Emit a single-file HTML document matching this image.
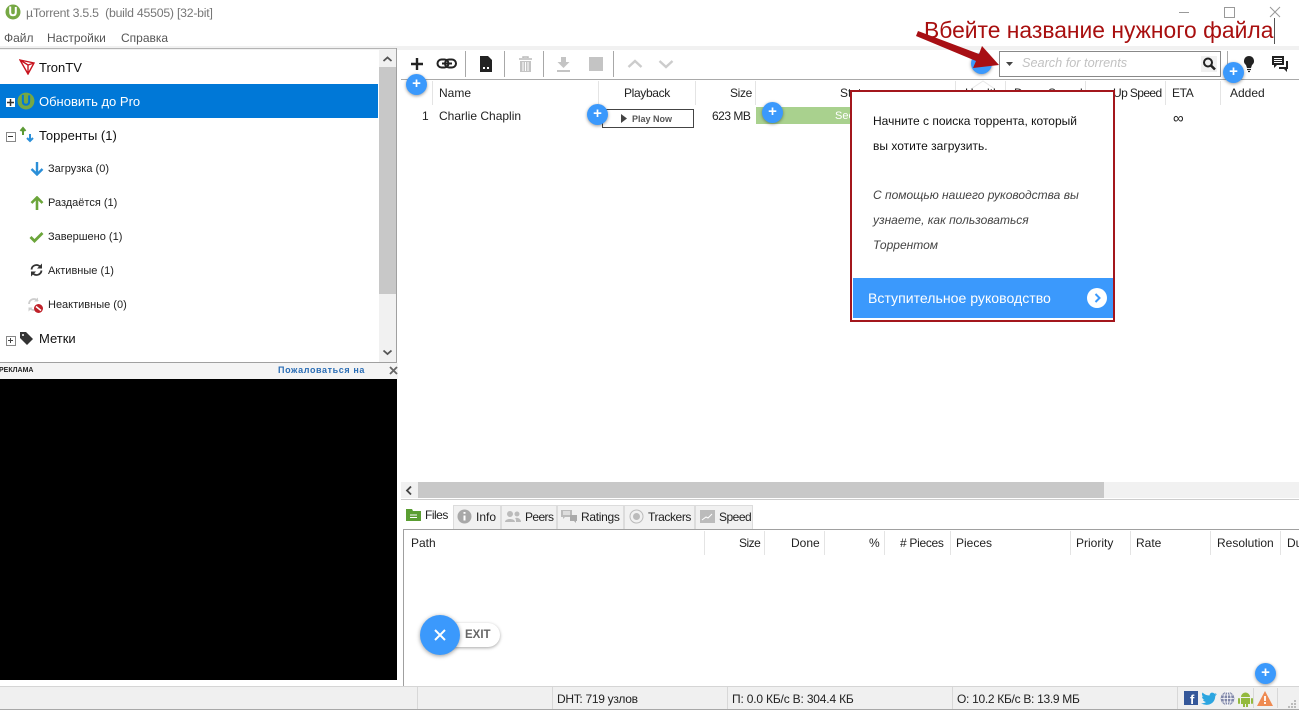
<!DOCTYPE html>
<html lang="ru"><head><meta charset="utf-8"><title>µTorrent</title>
<style>
html,body{margin:0;padding:0;background:#fff}
#p{position:relative;width:1299px;height:710px;overflow:hidden;background:#fff;font-family:"Liberation Sans","Noto Sans CJK SC",sans-serif;font-size:12px;color:#222}
#p div,#p svg{position:absolute}
.t{white-space:nowrap;line-height:16px;height:16px}
.g{color:#666}
.s{font-size:11px;color:#222}
.m{font-size:13px;color:#111}
.l{background:#e4e4e4;width:1px}
.ts{width:1px;background:#a8a8a8;top:51px;height:26px}
.b{width:21px;height:21px;border-radius:50%;background:#3b99fc;box-shadow:0 1px 3px rgba(0,0,0,.4);color:#fff;text-align:center;font:bold 15px/20px "Liberation Sans",sans-serif}
.h{top:85px}
.h2{top:535px}
.n{letter-spacing:-.35px}
.tab{top:505px;height:24px;background:#f1f1f1;border:1px solid #dcdcdc;border-bottom:0;box-sizing:border-box}
</style></head><body><div id="p">

<!-- title bar -->
<svg style="left:5px;top:4px" width="16" height="16" viewBox="0 0 16 16"><circle cx="8" cy="8" r="7.500" fill="#76a844"/><path d="M5.200 2.500v5.800c0 2 1 3 2.800 3s2.800-1 2.800-3V3" fill="none" stroke="#fff" stroke-width="2"/><path d="M8 6.500v2" stroke="#76a844" stroke-width="1.500"/></svg>
<div class="t g" style="left:26px;top:5px;font-size:12.300px;color:#777;letter-spacing:-.24px">µTorrent 3.5.5&nbsp; (build 45505) [32-bit]</div>
<div class="t" style="left:4px;top:30px;color:#555">Файл</div>
<div class="t" style="left:47px;top:30px;color:#555">Настройки</div>
<div class="t" style="left:121px;top:30px;color:#555">Справка</div>
<div style="left:1179px;top:12px;width:10px;height:1px;background:#999"></div>
<div style="left:1224px;top:7px;width:9px;height:9px;border:1px solid #999"></div>
<svg style="left:1269px;top:6px" width="12" height="12"><path d="M1 1l10 10M11 1L1 11" stroke="#999" fill="none"/></svg>
<div style="left:0;top:46px;width:1299px;height:4px;background:#f1f1f1"></div>

<!-- annotation -->
<div class="t" style="left:924px;top:17px;height:26px;line-height:26px;font-size:22.850px;color:#a80f0f">Вбейте название нужного файла</div>
<div style="left:1274px;top:18px;width:1px;height:26px;background:#555"></div>

<!-- sidebar -->
<div style="left:0;top:48px;width:397px;height:1px;background:#b4b4b4"></div>
<div style="left:396px;top:48px;width:1px;height:315px;background:#a0a0a0"></div>
<div style="left:0;top:362px;width:397px;height:1px;background:#a0a0a0"></div>
<div style="left:379px;top:49px;width:17px;height:313px;background:#f1f1f1"></div>
<div style="left:379px;top:67px;width:17px;height:227px;background:#c8c8c8"></div>
<svg style="left:381px;top:55px" width="13" height="9"><path d="M2.500 6L6.500 2.500 10.500 6" fill="none" stroke="#555" stroke-width="1.800"/></svg>
<svg style="left:381px;top:348px" width="13" height="9"><path d="M2.500 2.500L6.500 6 10.500 2.500" fill="none" stroke="#555" stroke-width="1.800"/></svg>
<div style="left:0;top:84px;width:378px;height:34px;background:#0078d7"></div>

<svg style="left:19px;top:59px" width="16" height="16" viewBox="0 0 16 16"><path d="M1 1l14 3-6 11z M1 1l8 14 M1 1l8 5 6-2 M9 6v9" fill="none" stroke="#c8141e" stroke-width="1.400"/></svg>
<div class="t m" style="left:39px;top:60px">TronTV</div>

<div style="left:6px;top:98px;width:9px;height:9px;background:#fff;border:0"></div>
<svg style="left:6px;top:98px" width="9" height="9"><path d="M1 4.500h7M4.500 1v7" stroke="#333" stroke-width="1.500"/></svg>
<svg style="left:17px;top:92px" width="18" height="18" viewBox="0 0 16 16"><circle cx="8" cy="8" r="7.500" fill="#76a844"/><path d="M5.200 2.500v5.800c0 2 1 3 2.800 3s2.800-1 2.800-3V3" fill="none" stroke="#0078d7" stroke-width="1.800"/></svg>
<div class="t m" style="left:39px;top:94px;color:#fff">Обновить до Pro</div>

<div style="left:6px;top:132px;width:8px;height:8px;border:1px solid #888"></div>
<div style="left:8px;top:136px;width:5px;height:1px;background:#333"></div>
<svg style="left:18px;top:126px" width="17" height="17"><path d="M5 9V3M2.500 5L5 2 7.500 5" stroke="#5c9a34" stroke-width="2" fill="none"/><path d="M12 8v7M9 12l3 3 3-3" stroke="#2b8fd8" stroke-width="2" fill="none"/></svg>
<div class="t m" style="left:39px;top:128px">Торренты (1)</div>

<svg style="left:30px;top:161px" width="14" height="15"><path d="M7 1v12M1.500 8L7 13.500 12.500 8" stroke="#2b8fd8" stroke-width="2.400" fill="none"/></svg>
<div class="t s" style="left:48px;top:161px">Загрузка (0)</div>
<svg style="left:30px;top:196px" width="14" height="15"><path d="M7 14V2M1.500 7L7 1.500 12.500 7" stroke="#6ba53a" stroke-width="2.600" fill="none"/></svg>
<div class="t s" style="left:48px;top:195px">Раздаётся (1)</div>
<svg style="left:29px;top:231px" width="15" height="12"><path d="M1.500 6L5.500 10 13.500 2" stroke="#6ba53a" stroke-width="2.800" fill="none"/></svg>
<div class="t s" style="left:48px;top:229px">Завершено (1)</div>
<svg style="left:30px;top:263px" width="13" height="14" viewBox="0 0 13 14"><path d="M1.500 6.500A5 5 0 0 1 10 3.500M11.500 7.500A5 5 0 0 1 3 10.500" stroke="#333" stroke-width="1.800" fill="none"/><path d="M12 0.500v5h-5zM1 13.500v-5h5z" fill="#333"/></svg>
<div class="t s" style="left:48px;top:263px">Активные (1)</div>
<svg style="left:27px;top:297px" width="17" height="17" viewBox="0 0 17 17"><path d="M2 7A5 5 0 0 1 11 4M12 8A5 5 0 0 1 3 11" stroke="#ccc" stroke-width="1.800" fill="none"/><path d="M11 0.500v4H7zM1.500 14.500v-4h4z" fill="#ccc"/><circle cx="11.500" cy="11.500" r="4.500" fill="#c0222a"/><path d="M9 9.500l5 4" stroke="#fff" stroke-width="1.500"/></svg>
<div class="t s" style="left:48px;top:297px">Неактивные (0)</div>

<div style="left:6px;top:336px;width:8px;height:8px;border:1px solid #888"></div>
<svg style="left:7px;top:337px" width="8" height="8"><path d="M1 3.500h5M3.500 1v5" stroke="#444"/></svg>
<svg style="left:19px;top:331px" width="15" height="15"><path d="M1 1h6l7 7-6 6-7-7z" fill="#333"/><circle cx="4" cy="4" r="1" fill="#fff"/></svg>
<div class="t m" style="left:39px;top:331px">Метки</div>

<!-- ad -->
<div style="left:0;top:363px;width:398px;height:16px;background:#f4f4f4"></div>
<div class="t" style="left:-1px;top:363px;font-size:7px;font-weight:bold;color:#222">РЕКЛАМА</div>
<div class="t" style="left:278px;top:362px;font-size:9px;font-weight:bold;color:#2a6db5;letter-spacing:.6px">Пожаловаться на</div>
<svg style="left:389px;top:366px" width="9" height="9"><path d="M1 1l7 7M8 1L1 8" stroke="#666" stroke-width="1.800"/></svg>
<div style="left:0;top:379px;width:397px;height:301px;background:#000"></div>

<!-- toolbar -->
<div style="left:401px;top:79px;width:898px;height:1px;background:#a9a9a9"></div>
<svg style="left:409px;top:56px" width="16" height="16"><path d="M8 2v12M2 8h12" stroke="#222" stroke-width="2.400"/></svg>
<svg style="left:436px;top:57px" width="22" height="14"><rect x="1.500" y="2.500" width="11" height="8" rx="4" fill="none" stroke="#222" stroke-width="2"/><rect x="9" y="2.500" width="11" height="8" rx="4" fill="none" stroke="#222" stroke-width="2"/><path d="M6 6.500h10" stroke="#222" stroke-width="2"/></svg>
<div class="ts" style="left:465px"></div>
<svg style="left:479px;top:56px" width="14" height="16"><path d="M1 0h8l4 4v12H1z" fill="#222"/><path d="M4 11h2v2H4zM8 11h2v2H8z" fill="#fff"/></svg>
<div class="ts" style="left:504px"></div>
<svg style="left:518px;top:56px" width="15" height="16"><path d="M1 3h13M5 2V1h5v1" stroke="#bbb" stroke-width="1.500" fill="none"/><path d="M2 5h11v11H2z" fill="#c4c4c4"/><path d="M5 6v9M7.500 6v9M10 6v9" stroke="#fff"/></svg>
<div class="ts" style="left:543px"></div>
<svg style="left:556px;top:56px" width="15" height="16"><path d="M5 1h5v5h3.500L7.500 12 1.500 6H5zM1 14h13v2H1z" fill="#c4c4c4"/></svg>
<div style="left:589px;top:57px;width:14px;height:14px;background:#c4c4c4"></div>
<div class="ts" style="left:613px"></div>
<svg style="left:627px;top:58px" width="16" height="12"><path d="M1.500 9L8 3l6.500 6" stroke="#ccc" stroke-width="2.400" fill="none"/></svg>
<svg style="left:658px;top:58px" width="16" height="12"><path d="M1.500 3L8 9l6.500-6" stroke="#ccc" stroke-width="2.400" fill="none"/></svg>

<!-- search -->
<div style="left:999px;top:51px;width:220px;height:24px;border:1px solid #888;background:#fff"></div>
<svg style="left:1005px;top:61px" width="9" height="6"><path d="M1 1h7L4.500 5z" fill="#444"/></svg>
<div class="t" style="left:1022px;top:55px;font-style:italic;font-size:12.700px;color:#c2c2c2">Search for torrents</div>
<div style="left:1201px;top:56px;width:16px;height:16px;background:#f0f0f0"></div>
<svg style="left:1201px;top:56px" width="16" height="16"><circle cx="7" cy="6.500" r="4" fill="none" stroke="#222" stroke-width="2"/><path d="M10 9.500l4 4" stroke="#222" stroke-width="2.600"/></svg>
<div style="left:1227px;top:51px;width:1px;height:26px;background:#aaa"></div>
<svg style="left:1243px;top:55px" width="13" height="18"><path d="M6 1a5 5 0 0 1 3 9l-1 3H4L3 10a5 5 0 0 1 3-9z" fill="#222"/><path d="M4 14.500h4M5 16.500h2" stroke="#222" stroke-width="1.300"/></svg>
<svg style="left:1271px;top:55px" width="18" height="18"><path d="M1 1h12v9H6l-3 3v-3H1z" fill="#222"/><path d="M3 3.500h8M3 5.500h8M3 7.500h8" stroke="#fff"/><path d="M15 6h2v8h-1v3l-3-3H8v-2h7z" fill="#222"/></svg>

<!-- list header -->
<div class="l" style="left:432px;top:81px;height:24px"></div>
<div class="l" style="left:598px;top:81px;height:24px"></div>
<div class="l" style="left:695px;top:81px;height:24px"></div>
<div class="l" style="left:755px;top:81px;height:24px"></div>
<div class="l" style="left:955px;top:81px;height:24px"></div>
<div class="l" style="left:1005px;top:81px;height:24px"></div>
<div class="l" style="left:1085px;top:81px;height:24px"></div>
<div class="l" style="left:1165px;top:81px;height:24px"></div>
<div class="l" style="left:1220px;top:81px;height:24px"></div>
<svg style="left:970px;top:80px" width="26" height="10"><path d="M1 9l12-8 12 8" fill="none" stroke="#e8e8e8"/></svg>
<div class="t h" style="left:439px">Name</div>
<div class="t h n" style="left:624px">Playback</div>
<div class="t h n" style="left:730px">Size</div>
<div class="t h" style="left:840px">Status</div>
<div class="t h" style="left:965px">Health</div>
<div class="t h" style="left:1014px">Down Speed</div>
<div class="t h" style="left:1113px;letter-spacing:-.6px">Up Speed</div>
<div class="t h n" style="left:1172px">ETA</div>
<div class="t h" style="left:1230px">Added</div>

<!-- row -->
<div class="t" style="left:422px;top:108px">1</div>
<div class="t" style="left:439px;top:108px">Charlie Chaplin</div>
<div style="left:602px;top:109px;width:90px;height:17px;border:1px solid #444;background:#fff"></div>
<svg style="left:620px;top:114px" width="8" height="9"><path d="M1 0l6 4.500-6 4.500z" fill="#444"/></svg>
<div class="t" style="left:632px;top:111px;font-size:9px;font-weight:bold;color:#555">Play Now</div>
<div class="t n" style="left:712px;top:108px;letter-spacing:-.5px">623 MB</div>
<div style="left:756px;top:107px;width:100px;height:17px;background:#a9d18e"></div>
<div class="t" style="left:835px;top:108px;color:#fff;font-size:11px">Seeding</div>
<div class="t" style="left:1173px;top:111px;font-size:15px">∞</div>

<!-- popup -->
<div style="left:850px;top:90px;width:261px;height:228px;border:2px solid #a3161c;background:#fff"></div>
<div class="t" style="left:873px;top:113px;color:#111">Начните с поиска торрента, который</div>
<div class="t" style="left:873px;top:138px;color:#111">вы хотите загрузить.</div>
<div class="t" style="left:873px;top:187px;font-style:italic;color:#444">С помощью нашего руководства вы</div>
<div class="t" style="left:873px;top:212px;font-style:italic;color:#444">узнаете, как пользоваться</div>
<div class="t" style="left:873px;top:237px;font-style:italic;color:#444">Торрентом</div>
<div style="left:853px;top:278px;width:260px;height:40px;background:#3b99fc"></div>
<div class="t" style="left:868px;top:290px;font-size:14.100px;color:#fff">Вступительное руководство</div>
<div style="left:1087px;top:288px;width:20px;height:20px;border-radius:50%;background:#fff"></div>
<svg style="left:1087px;top:288px" width="20" height="20"><path d="M8.500 6l4 4-4 4" stroke="#3b99fc" stroke-width="2" fill="none"/></svg>

<!-- scrollbar -->
<div style="left:401px;top:482px;width:898px;height:16px;background:#f1f1f1"></div>
<div style="left:418px;top:482px;width:686px;height:16px;background:#c8c8c8"></div>
<svg style="left:404px;top:485px" width="10" height="11"><path d="M7 1.500L3 5.500l4 4" fill="none" stroke="#444" stroke-width="1.800"/></svg>
<div style="left:401px;top:499px;width:898px;height:1px;background:#ccc"></div>

<!-- tabs -->
<div style="left:403px;top:529px;width:896px;height:1px;background:#a0a0a0"></div>
<div style="left:403px;top:529px;width:1px;height:157px;background:#a0a0a0"></div>
<div class="tab" style="left:453px;width:48px"></div>
<div class="tab" style="left:501px;width:56px"></div>
<div class="tab" style="left:557px;width:67px"></div>
<div class="tab" style="left:624px;width:71px"></div>
<div class="tab" style="left:695px;width:58px"></div>
<svg style="left:406px;top:508px" width="15" height="13"><path d="M0 1h6l1 2h8v10H0z" fill="#5a9e32"/><path d="M4 7h7M4 9.500h7" stroke="#fff"/></svg>
<div class="t" style="left:425px;top:507px;color:#222;letter-spacing:-.5px">Files</div>
<svg style="left:457px;top:509px" width="15" height="15"><circle cx="7.500" cy="7.500" r="7" fill="#a8a8a8"/><path d="M7.500 3v1.800M7.500 6.500v5" stroke="#fff" stroke-width="2"/></svg>
<div class="t" style="left:476px;top:509px">Info</div>
<svg style="left:505px;top:510px" width="16" height="13"><circle cx="5" cy="4" r="3" fill="#bbb"/><circle cx="12" cy="4" r="2.500" fill="#bbb"/><path d="M0 12c0-4 10-4 10 0zM11 12c0-2 0-3-1-4 3-1 6 1 6 4z" fill="#bbb"/></svg>
<div class="t" style="left:525px;top:509px;letter-spacing:-.6px">Peers</div>
<svg style="left:561px;top:510px" width="17" height="13"><path d="M0 0h11v7H4L2 9V7H0z" fill="#bbb"/><path d="M2 2h7M2 4h7" stroke="#fff"/><path d="M9 5h7v6h-1v2l-2-2H9z" fill="#aaa"/></svg>
<div class="t" style="left:581px;top:509px;letter-spacing:-.3px">Ratings</div>
<svg style="left:629px;top:509px" width="15" height="15"><circle cx="7.500" cy="7.500" r="6.500" fill="none" stroke="#bbb"/><circle cx="7.500" cy="7.500" r="3.500" fill="#bbb"/></svg>
<div class="t" style="left:648px;top:509px;letter-spacing:-.4px">Trackers</div>
<svg style="left:700px;top:510px" width="15" height="13"><rect width="15" height="13" fill="#bbb"/><path d="M2 10l4-3 2 1 4-4" stroke="#fff" fill="none"/></svg>
<div class="t" style="left:719px;top:509px;letter-spacing:-.5px">Speed</div>

<!-- lower header -->
<div class="l" style="left:704px;top:531px;height:24px"></div>
<div class="l" style="left:764px;top:531px;height:24px"></div>
<div class="l" style="left:824px;top:531px;height:24px"></div>
<div class="l" style="left:884px;top:531px;height:24px"></div>
<div class="l" style="left:950px;top:531px;height:24px"></div>
<div class="l" style="left:1070px;top:531px;height:24px"></div>
<div class="l" style="left:1130px;top:531px;height:24px"></div>
<div class="l" style="left:1210px;top:531px;height:24px"></div>
<div class="l" style="left:1280px;top:531px;height:24px"></div>
<div class="t h2" style="left:411px">Path</div>
<div class="t h2" style="left:739px;letter-spacing:-.5px">Size</div>
<div class="t h2" style="left:791px">Done</div>
<div class="t h2" style="left:869px">%</div>
<div class="t h2" style="left:900px;letter-spacing:-.3px">#&nbsp;Pieces</div>
<div class="t h2" style="left:956px">Pieces</div>
<div class="t h2" style="left:1076px">Priority</div>
<div class="t h2" style="left:1136px">Rate</div>
<div class="t h2" style="left:1217px">Resolution</div>
<div class="t h2" style="left:1287px">Du</div>

<!-- exit -->
<div style="left:440px;top:623px;width:60px;height:24px;border-radius:12px;background:#fff;box-shadow:0 1px 3px rgba(0,0,0,.35)"></div>
<div class="t" style="left:465px;top:627px;font-weight:bold;font-size:11.500px;color:#666">EXIT</div>
<div style="left:420px;top:615px;width:40px;height:40px;border-radius:50%;background:#3b99fc;box-shadow:0 1px 4px rgba(0,0,0,.4)"></div>
<svg style="left:433px;top:628px" width="14" height="14"><path d="M2 2l10 10M12 2L2 12" stroke="#fff" stroke-width="2"/></svg>

<!-- status bar -->
<div style="left:0;top:686px;width:1299px;height:24px;background:#f0f0f0;border-top:1px solid #d5d5d5;box-sizing:border-box"></div>
<div style="left:0;top:709px;width:1299px;height:1px;background:#a8a8a8"></div>
<div class="l" style="left:417px;top:687px;height:22px;background:#d8d8d8"></div>
<div class="l" style="left:552px;top:687px;height:22px;background:#d8d8d8"></div>
<div class="l" style="left:727px;top:687px;height:22px;background:#d8d8d8"></div>
<div class="l" style="left:952px;top:687px;height:22px;background:#d8d8d8"></div>
<div class="l" style="left:1177px;top:687px;height:22px;background:#d8d8d8"></div>
<div class="t" style="left:557px;top:691px;letter-spacing:-.3px">DHT: 719 узлов</div>
<div class="t" style="left:732px;top:691px;letter-spacing:-.18px">П: 0.0 КБ/с В: 304.4 КБ</div>
<div class="t" style="left:957px;top:691px;letter-spacing:-.3px">О: 10.2 КБ/с В: 13.9 МБ</div>
<div style="left:1184px;top:691px;width:14px;height:14px;background:#35589a"></div>
<div class="t" style="left:1190px;top:692px;height:14px;line-height:15px;font-weight:bold;font-size:13px;color:#fff">f</div>
<svg style="left:1201px;top:692px" width="16" height="13"><path d="M16 2l-2 .5 1.500-1.500-2 .7C12 0 9 0 8.500 3.500 5.500 3.500 3 2 1.500 .5.500 2 1 4 2.500 5L1 4.500C1 6 2 7.500 3.500 8H2c.5 1 1.500 1.800 3 2-1.500 1-3 1.500-5 1.300C5 14.500 14 13 14.300 4z" fill="#2ca5e0"/></svg>
<svg style="left:1220px;top:691px" width="15" height="15"><circle cx="7.500" cy="7.500" r="6.800" fill="#8087a8"/><path d="M1 7.500h13M7.500 1v13M2 4h11M2 11h11" stroke="#fff" stroke-width=".8"/><ellipse cx="7.500" cy="7.500" rx="3.500" ry="6.800" fill="none" stroke="#fff" stroke-width=".8"/></svg>
<svg style="left:1238px;top:691px" width="15" height="16"><path d="M3 6a4.500 4.500 0 0 1 9 0zM3 7h9v6H3zM5 13h2v3H5zM8 13h2v3H8z" fill="#93b93e"/><rect x="0" y="7" width="2" height="6" rx="1" fill="#93b93e"/><rect x="13" y="7" width="2" height="6" rx="1" fill="#93b93e"/></svg>
<div class="l" style="left:1253px;top:688px;height:20px;background:#d8d8d8"></div>
<svg style="left:1257px;top:691px" width="16" height="15"><path d="M8 0l8 15H0z" fill="#ee8a52"/><path d="M8 5v5M8 11v2" stroke="#fff" stroke-width="1.800"/></svg>
<div class="l" style="left:1277px;top:688px;height:20px;background:#d8d8d8"></div>
<svg style="left:1288px;top:699px" width="9" height="9"><path d="M6 1h2v2H6zM3 4h2v2H3zM6 4h2v2H6zM0 7h2v2H0zM3 7h2v2H3zM6 7h2v2H6z" fill="#bbb"/></svg>

<!-- floating plus buttons -->
<div class="b" style="left:406px;top:74px">+</div>
<div class="b" style="left:587px;top:104px">+</div>
<div class="b" style="left:762px;top:102px">+</div>
<div class="b" style="left:971px;top:53px">+</div>
<svg style="left:915px;top:28px" width="90" height="46"><path d="M3 3L64 26 67 18 84 37 58 40 61 33 1 8z" fill="#a80f14"/></svg>
<div class="b" style="left:1223px;top:62px">+</div>
<div class="b" style="left:1255px;top:663px">+</div>

</div></body></html>
